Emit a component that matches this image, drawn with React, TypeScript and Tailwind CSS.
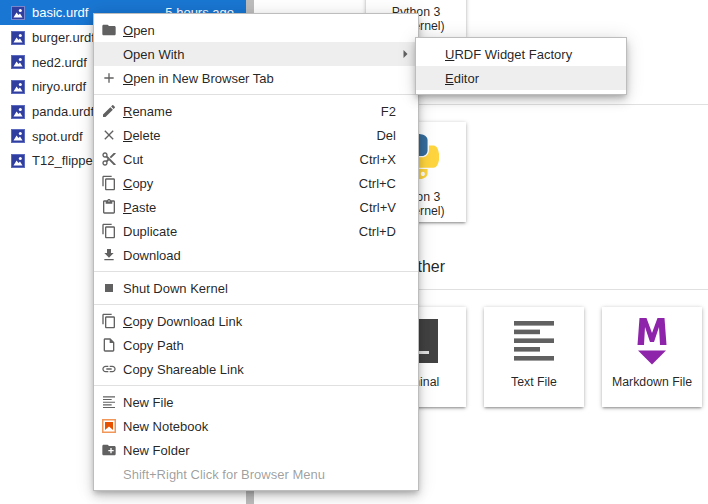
import React from "react";

const P = {
  folder: "M10 4H4c-1.1 0-2 .9-2 2v12c0 1.1.9 2 2 2h16c1.1 0 2-.9 2-2V8c0-1.1-.9-2-2-2h-8l-2-2z",
  add: "M19 13h-6v6h-2v-6H5v-2h6V5h2v6h6v2z",
  edit: "M3 17.25V21h3.75L17.81 9.94l-3.75-3.75L3 17.25zM20.71 7.04c.39-.39.39-1.02 0-1.41l-2.34-2.34c-.39-.39-1.02-.39-1.41 0l-1.83 1.83 3.75 3.75 1.83-1.83z",
  close: "M19 6.41L17.59 5 12 10.59 6.41 5 5 6.41 10.59 12 5 17.59 6.41 19 12 13.41 17.59 19 19 17.59 13.41 12z",
  cut: "M9.64 7.64c.23-.5.36-1.05.36-1.64 0-2.21-1.79-4-4-4S2 3.79 2 6s1.79 4 4 4c.59 0 1.14-.13 1.64-.36L10 12l-2.36 2.36C7.14 14.13 6.59 14 6 14c-2.21 0-4 1.79-4 4s1.79 4 4 4 4-1.79 4-4c0-.59-.13-1.14-.36-1.64L12 14l7 7h3v-1L9.64 7.64zM6 8c-1.1 0-2-.89-2-2s.9-2 2-2 2 .89 2 2-.9 2-2 2zm0 12c-1.1 0-2-.89-2-2s.9-2 2-2 2 .89 2 2-.9 2-2 2zm6-7.5c-.28 0-.5-.22-.5-.5s.22-.5.5-.5.5.22.5.5-.22.5-.5.5zM19 3l-6 6 2 2 7-7V3z",
  copy: "M16 1H4c-1.1 0-2 .9-2 2v14h2V3h12V1zm3 4H8c-1.1 0-2 .9-2 2v14c0 1.1.9 2 2 2h11c1.1 0 2-.9 2-2V7c0-1.1-.9-2-2-2zm0 16H8V7h11v14z",
  paste: "M19 2h-4.18C14.4.84 13.3 0 12 0c-1.3 0-2.4.84-2.82 2H5c-1.1 0-2 .9-2 2v16c0 1.1.9 2 2 2h14c1.1 0 2-.9 2-2V4c0-1.1-.9-2-2-2zm-7 0c.55 0 1 .45 1 1s-.45 1-1 1-1-.45-1-1 .45-1 1-1zm7 18H5V4h2v3h10V4h2v16z",
  download: "M19 9h-4V3H9v6H5l7 7 7-7zM5 18v2h14v-2H5z",
  stop: "M6 6h12v12H6z",
  file: "M14 2H6c-1.1 0-1.99.9-1.99 2L4 20c0 1.1.89 2 1.99 2H18c1.1 0 2-.9 2-2V8l-6-6zM6 20V4h7v5h5v11H6z",
  link: "M3.9 12c0-1.71 1.39-3.1 3.1-3.1h4V7H7c-2.76 0-5 2.24-5 5s2.24 5 5 5h4v-1.9H7c-1.71 0-3.1-1.39-3.1-3.1zM8 13h8v-2H8v2zm9-6h-4v1.9h4c1.71 0 3.1 1.39 3.1 3.1s-1.39 3.1-3.1 3.1h-4V17h4c2.76 0 5-2.24 5-5s-2.24-5-5-5z",
  text: "M3 3.5h18v1.6H3zM3 7.5h13v1.6H3zM3 11.5h18v1.6H3zM3 15.5h13v1.6H3zM3 19.5h18v1.6H3z",
  newFolder: "M20 6h-8l-2-2H4c-1.11 0-1.99.89-1.99 2L2 18c0 1.11.89 2 2 2h16c1.11 0 2-.89 2-2V8c0-1.11-.89-2-2-2zm-1 8h-3v3h-2v-3h-3v-2h3V9h2v3h3v2z",
};

function Icon({ d }: { d: string }) {
  return (
    <svg viewBox="0 0 24 24" className="w-4 h-4 fill-[#616161]">
      <path d={d} />
    </svg>
  );
}

function NotebookIcon() {
  return (
    <svg viewBox="0 0 14 14" className="w-[14px] h-[14px] shrink-0">
      <rect x="0.75" y="0.75" width="12.5" height="12.5" fill="#fff" stroke="#f2975a" strokeWidth="1.5" />
      <rect x="3" y="3" width="8" height="8" fill="#e65100" />
      <path d="M3 11 L5 9.2 L7 7.6 L9 9.2 L11 11 Z" fill="#fff" />
    </svg>
  );
}

function ImageIcon({ selected }: { selected?: boolean }) {
  return (
    <svg viewBox="0 0 14 14" className="w-[14px] h-[14px] shrink-0">
      <rect x="0.5" y="0.5" width="13" height="13" fill="#303f9f" stroke={selected ? "#7986cb" : "#5c6bc0"} />
      <path d="M2.5 11.5 L5.6 6.6 L7.4 9 L9 7.6 L11.5 11.5 Z" fill="#fff" />
      <circle cx="9.3" cy="4.4" r="1.5" fill="#fff" />
    </svg>
  );
}

function Row({ name, selected }: { name: string; selected?: boolean }) {
  return (
    <div className={`flex items-center h-[24.67px] pt-[1.4px] pl-[11px] pr-3 ${selected ? "bg-[#1976d2] text-white" : ""}`}>
      <ImageIcon selected={selected} />
      <span className="ml-[7px] whitespace-nowrap">{name}</span>
      {selected && <span className="ml-auto whitespace-nowrap">5 hours ago</span>}
    </div>
  );
}

type Item = {
  label: React.ReactNode;
  icon?: React.ReactNode;
  keys?: string;
  active?: boolean;
  arrow?: boolean;
  disabled?: boolean;
};

function MenuRow({ label, icon, keys, active, arrow, disabled }: Item) {
  return (
    <div className={`flex items-center h-6 pl-[7px] ${active ? "bg-[#eeeeee]" : ""} ${disabled ? "text-black/40" : ""}`}>
      <span className="w-4 h-4 flex items-center justify-center shrink-0">{icon}</span>
      <span className="ml-[6px] pt-[2px] whitespace-nowrap">{label}</span>
      {keys && <span className="ml-auto pt-[2px] mr-[22px]">{keys}</span>}
      {arrow && (
        <svg viewBox="0 0 5 8" className="ml-auto mr-[10px] w-[5px] h-2 fill-[#616161]">
          <path d="M0.5 0 L4.5 4 L0.5 8 Z" />
        </svg>
      )}
    </div>
  );
}

const Sep = () => <div className="h-[9px] flex items-center"><div className="w-full h-px bg-[#e0e0e0]" /></div>;

const U = ({ c, r }: { c: string; r: string }) => (
  <>
    <u>{c}</u>
    {r}
  </>
);

function Card({ label, children }: { label: React.ReactNode; children?: React.ReactNode }) {
  return (
    <div className="relative w-[100px] h-[100px] bg-white shadow-[0_1px_4px_0_rgba(0,0,0,0.3),0_2px_2px_-1px_rgba(0,0,0,0.25)] flex flex-col items-center shrink-0">
      <div className="h-[65px] w-full flex items-center justify-center pt-[3px]">{children}</div>
      <div className="text-[12.3px] leading-[14px] text-center mt-[3px]">{label}</div>
    </div>
  );
}

function PythonLogo() {
  return (
    <svg viewBox="0 0 110 111" className="w-[45px] h-[45px]">
      <path fill="#366d9c" d="M54.919 0c-4.584.022-8.961.413-12.813 1.095C30.76 3.099 28.7 7.295 28.7 15.032V25.25h26.813v3.406H18.638c-7.793 0-14.616 4.684-16.75 13.594-2.462 10.213-2.571 16.586 0 27.25 1.905 7.938 6.457 13.594 14.25 13.594h9.218v-12.25c0-8.85 7.657-16.656 16.75-16.656h26.782c7.454 0 13.406-6.138 13.406-13.625v-25.531c0-7.266-6.13-12.725-13.406-13.937C64.282.328 59.502-.02 54.918 0zm-14.5 8.22c2.77 0 5.03 2.298 5.03 5.125 0 2.816-2.26 5.093-5.03 5.093-2.78 0-5.031-2.277-5.031-5.093 0-2.827 2.251-5.125 5.03-5.125z" />
      <path fill="#ffd53f" d="M85.638 28.657v11.906c0 9.231-7.826 17-16.75 17H42.106c-7.336 0-13.406 6.279-13.406 13.625V96.72c0 7.266 6.319 11.54 13.406 13.625 8.488 2.495 16.627 2.946 26.782 0 6.75-1.955 13.406-5.888 13.406-13.625V86.5H55.513v-3.405H95.7c7.793 0 10.696-5.436 13.406-13.594 2.8-8.399 2.68-16.476 0-27.25-1.926-7.757-5.604-13.594-13.406-13.594zM70.575 93.313c2.78 0 5.03 2.278 5.03 5.094 0 2.827-2.25 5.125-5.03 5.125-2.77 0-5.03-2.298-5.03-5.125 0-2.816 2.26-5.094 5.03-5.094z" />
    </svg>
  );
}

const PyLabel = () => (
  <>
    Python 3
    <br />
    (ipykernel)
  </>
);

function Heading({ children }: { children?: React.ReactNode }) {
  return (
    <div className="pl-[151px] h-[68px] border-b border-[#e0e0e0] flex items-end">
      <span className="text-[16px] leading-[20px] mb-[12px]">{children}</span>
    </div>
  );
}

export default function App() {
  return (
    <div className="relative w-[708px] h-[504px] overflow-hidden bg-white flex text-[13px] text-black/[0.87] font-['Liberation_Sans',sans-serif]">
      <div className="w-[246px] shrink-0">
        <Row name="basic.urdf" selected />
        <Row name="burger.urdf" />
        <Row name="ned2.urdf" />
        <Row name="niryo.urdf" />
        <Row name="panda.urdf" />
        <Row name="spot.urdf" />
        <Row name="T12_flipper.urdf" />
      </div>
      <div className="w-2 shrink-0 bg-[#bdbdbd]" />
      <div className="flex-1 mt-[-63px] pb-4">
        <div className="pl-[112px]">
          <Card label={<PyLabel />}>
            <PythonLogo />
          </Card>
        </div>
        <Heading />
        <div className="pl-[112px] pt-[17px]">
          <Card label={<PyLabel />}>
            <PythonLogo />
          </Card>
        </div>
        <Heading>Other</Heading>
        <div className="pl-[112px] pt-[17px] flex gap-[18px]">
          <Card label="Terminal">
            <svg viewBox="0 0 44 44" className="w-[44px] h-[44px]">
              <rect width="44" height="44" fill="#424242" />
              <path d="M6 9l9 7-9 7z" fill="#fff" />
              <rect x="17" y="32" width="18" height="3" fill="#e0e0e0" />
            </svg>
          </Card>
          <Card label="Text File">
            <svg viewBox="0 0 40 40" className="w-10 h-10">
              <g fill="#616161">
                <rect x="0" y="0" width="40" height="4.6" />
                <rect x="0" y="8.6" width="26" height="4.6" />
                <rect x="0" y="17.4" width="40" height="4.6" />
                <rect x="0" y="26" width="26" height="4.6" />
                <rect x="0" y="35" width="40" height="4.6" />
              </g>
            </svg>
          </Card>
          <Card label="Markdown File">
            <svg viewBox="0 0 30 47" className="w-[30px] h-[47px]">
              <path fill="#8e24aa" d="M0.5 27 L2.5 0 H9.5 L15 15 L20.5 0 H27.5 L29.5 27 H23 L22 9 L17 24 H13 L8 9 L7 27 Z" />
              <path fill="#8e24aa" d="M1 32.5 H29 L15 46.5 Z" />
            </svg>
          </Card>
        </div>
      </div>

      {/* Context menu */}
      <div className="absolute left-[93px] top-[13px] w-[326px] h-[478px] bg-white border border-[#bdbdbd] py-1 shadow-[0_3px_5px_-1px_rgba(0,0,0,0.2),0_6px_10px_0_rgba(0,0,0,0.14),0_1px_18px_0_rgba(0,0,0,0.12)]">
        <MenuRow icon={<Icon d={P.folder} />} label={<U c="O" r="pen" />} />
        <MenuRow label="Open With" active arrow />
        <MenuRow icon={<Icon d={P.add} />} label={<U c="O" r="pen in New Browser Tab" />} />
        <Sep />
        <MenuRow icon={<Icon d={P.edit} />} label={<U c="R" r="ename" />} keys="F2" />
        <MenuRow icon={<Icon d={P.close} />} label={<U c="D" r="elete" />} keys="Del" />
        <MenuRow icon={<Icon d={P.cut} />} label="Cut" keys="Ctrl+X" />
        <MenuRow icon={<Icon d={P.copy} />} label={<U c="C" r="opy" />} keys="Ctrl+C" />
        <MenuRow icon={<Icon d={P.paste} />} label={<U c="P" r="aste" />} keys="Ctrl+V" />
        <MenuRow icon={<Icon d={P.copy} />} label="Duplicate" keys="Ctrl+D" />
        <MenuRow icon={<Icon d={P.download} />} label="Download" />
        <Sep />
        <MenuRow icon={<Icon d={P.stop} />} label="Shut Down Kernel" />
        <Sep />
        <MenuRow icon={<Icon d={P.copy} />} label={<U c="C" r="opy Download Link" />} />
        <MenuRow icon={<Icon d={P.file} />} label="Copy Path" />
        <MenuRow icon={<Icon d={P.link} />} label="Copy Shareable Link" />
        <Sep />
        <MenuRow icon={<Icon d={P.text} />} label="New File" />
        <MenuRow icon={<NotebookIcon />} label="New Notebook" />
        <MenuRow icon={<Icon d={P.newFolder} />} label="New Folder" />
        <MenuRow label="Shift+Right Click for Browser Menu" disabled />
      </div>

      {/* Submenu */}
      <div className="absolute left-[415px] top-[37px] w-[212px] h-[58px] bg-white border border-[#bdbdbd] py-1 shadow-[0_3px_5px_-1px_rgba(0,0,0,0.2),0_6px_10px_0_rgba(0,0,0,0.14),0_1px_18px_0_rgba(0,0,0,0.12)]">
        <MenuRow label={<U c="U" r="RDF Widget Factory" />} />
        <MenuRow label={<U c="E" r="ditor" />} active />
      </div>
    </div>
  );
}
